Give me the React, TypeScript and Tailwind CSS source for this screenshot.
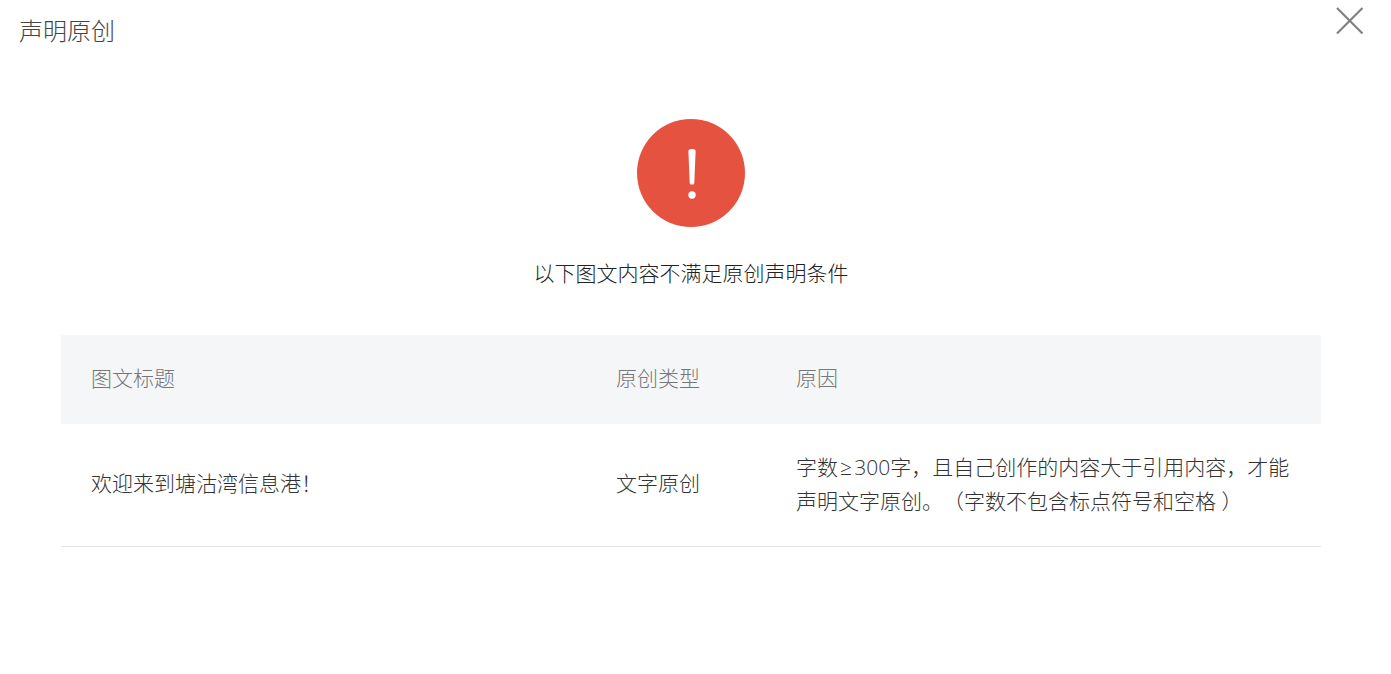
const FONT = "font-['Open_Sans','Noto_Sans_CJK_SC',sans-serif] font-light [text-spacing-trim:space-all]";

const REASON = "字数\u200a≥\u200a300字，且自己创作的内容大于引用内容，才能声明文字原创。（字数不包含标点符号和空格 ）";

export default function App() {
  return (
    <div className={`relative h-[674px] w-[1391px] overflow-hidden bg-white ${FONT}`}>
      <div className="flex h-[62px] items-center pb-[1px] pl-[19px] text-[24px] text-[#444444]">声明原创</div>

      <button className="absolute right-[27px] top-[7px] h-7 w-7 text-[#808080]">
        <svg viewBox="0 0 28 28" className="h-7 w-7" fill="none" stroke="currentColor" strokeWidth="2.2">
          <path d="M1 1 26.5 26.5M26.5 1 1 26.5" />
        </svg>
      </button>

      <div className="w-[1382px]">
        <div className="flex flex-col items-center pt-[57px]">
          <div className="flex h-[108px] w-[108px] items-center justify-center rounded-full bg-[#e65240]">
            <svg viewBox="-1 -3 12 54" className="h-[54px] w-3" fill="white">
              <path d="M2.4 2.5a2.5 2.5 0 0 1 2.5-2.5h2.2a2.5 2.5 0 0 1 2.5 2.5L8.3 34a1.6 1.6 0 0 1-1.6 1.5H5.3A1.6 1.6 0 0 1 3.7 34z" />
              <circle cx="6" cy="46" r="3.7" />
            </svg>
          </div>
          <p className="mt-[32px] text-[21px] leading-[28px] text-[#222222]">以下图文内容不满足原创声明条件</p>
        </div>

        <div className="mx-[61px] mt-[48px] w-[1260px] text-[21px] text-[#333333]">
          <div className="flex h-[89px] items-center bg-[#f5f6f8] pb-[1px] text-[#777777]">
            <div className="w-[555px] pl-[30px]">图文标题</div>
            <div className="w-[180px]">原创类型</div>
            <div>原因</div>
          </div>
          <div className="flex h-[123px] items-center border-b border-[#e4e4e4] pb-[2px]">
            <div className="w-[555px] pl-[30px]">欢迎来到塘沽湾信息港！</div>
            <div className="w-[180px]">文字原创</div>
            <div className="w-[500px] leading-[34px]">{REASON}</div>
          </div>
        </div>
      </div>
    </div>
  );
}
